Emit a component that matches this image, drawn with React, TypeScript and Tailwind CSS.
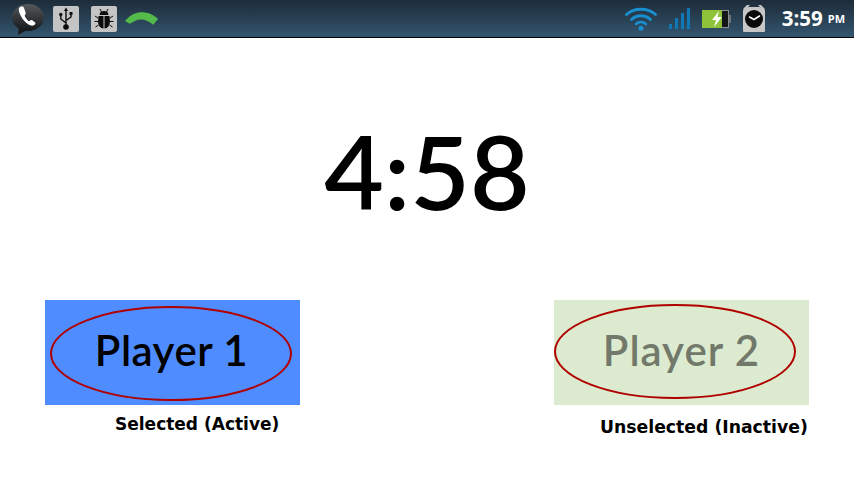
import { Fragment } from 'react';

function PhoneBubble() {
  return (
    <svg width="34" height="34" viewBox="0 0 34 34">
      <defs>
        <linearGradient id="bubble" x1="0" y1="0" x2="0" y2="1">
          <stop offset="0" stopColor="#55595c" />
          <stop offset="1" stopColor="#15181a" />
        </linearGradient>
      </defs>
      <ellipse cx="17" cy="15.500" rx="16" ry="13.500" fill="url(#bubble)" />
      <path d="M8 25 L7 33 L16 28 Z" fill="#1a1c1e" />
      <path
        d="M9 5 C7.500 6 7.500 8 8.500 11 C10 15.500 13.500 20 17.500 22.500 C20 24 22.500 24 24 22.500 C24.800 21.500 24.500 20.800 23.500 20 L21.200 18.300 C20.200 17.600 19.500 18 18.800 18.800 C18 19.300 17.200 19 16 17.500 C14.500 15.800 13.500 14 13.800 13 C14.600 12.300 15 11.500 14.500 10.300 L13 6 C12.500 4.700 10.500 4.200 9 5 Z"
        fill="#ffffff"
      />
    </svg>
  );
}

function UsbIcon() {
  return (
    <div className="flex h-[26px] w-[26px] items-center justify-center rounded-[2px] bg-[#c4c4c4]">
      <svg width="16" height="24" viewBox="0 0 16 24">
        <path d="M8 0.500 L10 4 L6 4 Z" fill="#0a0a0a" />
        <path d="M8 3 V20 M8 16 L2.800 12 V8.500 M8 13.500 L13 10 V7.500" stroke="#0a0a0a" strokeWidth="1.400" fill="none" />
        <circle cx="2.800" cy="7.500" r="1.700" fill="#0a0a0a" />
        <rect x="11.500" y="5" width="3" height="3" fill="#0a0a0a" />
        <circle cx="8" cy="20" r="2.800" fill="#0a0a0a" />
      </svg>
    </div>
  );
}

function BugIcon() {
  return (
    <div className="flex h-[26px] w-[26px] items-center justify-center rounded-[2px] bg-[#c4c4c4]">
      <svg width="22" height="22" viewBox="0 0 22 22">
        <path d="M7 1 L8.500 4 M15 1 L13.500 4" stroke="#0a0a0a" strokeWidth="1" />
        <path d="M6.500 7 C6.500 4.500 8.500 3 11 3 C13.500 3 15.500 4.500 15.500 7 Z" fill="#0a0a0a" />
        <path d="M5.500 8 H10.500 V20.500 C7.500 20.500 5 17.500 5 13 Z M11.500 8 H16.500 L17 13 C17 17.500 14.500 20.500 11.500 20.500 Z" fill="#0a0a0a" />
        <path d="M5 10 L2 8 M5 13.500 L1.500 13.500 M5.500 17 L2.500 19 M17 10 L20 8 M17 13.500 L20.500 13.500 M16.500 17 L19.500 19" stroke="#0a0a0a" strokeWidth="1" />
      </svg>
    </div>
  );
}

function CallArc() {
  return (
    <svg width="35" height="15" viewBox="0 0 36 15">
      <path d="M1 10 C7 3 13 1 18 1 C24 1 30 3 35 8 L30 14 C26 10.500 22 8.500 18 8.500 C13 8.500 10 10.500 6 13 Z" fill="#54bb4a" />
    </svg>
  );
}

function Wifi() {
  return (
    <svg width="32" height="24" viewBox="0 0 32 24" fill="none" stroke="#1a8fd0" strokeLinecap="round">
      <path d="M1.500 7.500 C9 0.500 23 0.500 30.500 7.500" strokeWidth="2.800" />
      <path d="M6.500 12.500 C12 7.500 20 7.500 25.500 12.500" strokeWidth="2.800" />
      <path d="M11 17 C14 14.500 18 14.500 21 17" strokeWidth="2.600" />
      <circle cx="16" cy="21.300" r="2.500" fill="#1a8fd0" stroke="none" />
    </svg>
  );
}

function Signal() {
  return (
    <div className="flex h-[21px] items-end gap-[3px]">
      <div className="h-[5px] w-[3px] bg-[#0f78b8]" />
      <div className="h-[11px] w-[3px] bg-[#0f78b8]" />
      <div className="h-[16px] w-[3px] bg-[#0f78b8]" />
      <div className="h-[21px] w-[3px] bg-[#0f78b8]" />
    </div>
  );
}

function Battery() {
  return (
    <svg width="29" height="18" viewBox="0 0 29 18">
      <rect x="0" y="0" width="27" height="18" fill="#8a9094" />
      <rect x="19" y="1" width="7" height="16" fill="#141617" />
      <rect x="0" y="0" width="20" height="18" fill="#8fc43a" />
      <rect x="27" y="5" width="2" height="8" fill="#6a7276" />
      <path d="M17 1 L10 10 H14 L12 17 L20 7 H15.500 Z" fill="#ffffff" />
    </svg>
  );
}

function Alarm() {
  return (
    <svg width="24" height="27" viewBox="0 0 24 27">
      <path d="M1 4 L5 0 H8 L3 5 Z M23 4 L19 0 H16 L21 5 Z" fill="#c6c6c6" />
      <path d="M1 5 L6 2 H18 L23 5 V25.500 C23 26.500 22.500 27 21.500 27 H2.500 C1.500 27 1 26.500 1 25.500 Z" fill="#c6c6c6" />
      <circle cx="12" cy="14" r="9" fill="#0a0a0a" />
      <path d="M12 14.500 L17.500 11 M12 14.500 L7.500 12" stroke="#ffffff" strokeWidth="1.500" strokeLinecap="round" />
    </svg>
  );
}

type PlayerProps = {
  name: string;
  caption: string;
  active: boolean;
};

function PlayerCard({ name, caption, active }: PlayerProps) {
  return (
    <div className="flex w-[255px] flex-col">
      <div
        className={
          active
            ? 'relative flex h-[105px] items-center justify-center bg-[#4f8cff] pr-[2px] pb-[5px] text-black'
            : 'relative flex h-[105px] items-center justify-center bg-[#dcebcf] pb-[5px] text-[#72796b]'
        }
      >
        <span
          className={
            active
              ? "font-['Lato',sans-serif] text-[42px] leading-none font-semibold tracking-[0.5px]"
              : "font-['Lato',sans-serif] text-[42px] leading-none font-semibold tracking-[1px]"
          }
        >
          {name}
        </span>
        {/* hand drawn ring over the button */}
        <svg className="absolute inset-0" width="255" height="105" viewBox="0 0 255 105" fill="none">
          {active ? (
            <ellipse cx="126" cy="53.500" rx="120" ry="46.500" stroke="#b00000" strokeWidth="2" />
          ) : (
            <ellipse cx="121" cy="51.500" rx="120" ry="46.500" stroke="#b00000" strokeWidth="2" />
          )}
        </svg>
      </div>
      <p
        className={
          active
            ? "mt-[9px] pl-[70px] font-['DejaVu_Sans',sans-serif] text-[17px] leading-5 font-bold whitespace-nowrap text-black"
            : "mt-[12px] pl-[46px] font-['DejaVu_Sans',sans-serif] text-[17.25px] leading-5 font-bold whitespace-nowrap text-black"
        }
      >
        {caption}
      </p>
    </div>
  );
}

export default function App() {
  return (
    <Fragment>
      <div className="flex h-[480px] w-[854px] flex-col overflow-hidden bg-white">
        {/* Status bar */}
        <div className="flex h-[38px] shrink-0 items-center justify-between border-b border-black bg-gradient-to-b from-[#1e2c3a] to-[#33566f] pr-[9px] pl-[11px]">
          <div className="flex items-center">
            <PhoneBubble />
            <div className="ml-[8px]">
              <UsbIcon />
            </div>
            <div className="ml-[12px]">
              <BugIcon />
            </div>
            <div className="ml-[7px]">
              <CallArc />
            </div>
          </div>
          <div className="flex items-center">
            <Wifi />
            <div className="ml-[12px]">
              <Signal />
            </div>
            <div className="ml-[12px]">
              <Battery />
            </div>
            <div className="ml-[11px]">
              <Alarm />
            </div>
            <span className="ml-[16px] font-['Open_Sans',sans-serif] text-[20.5px] leading-none font-bold text-white">
              3:59
            </span>
            <span className="ml-[5px] font-['Open_Sans',sans-serif] text-[11px] leading-none font-bold text-white">
              PM
            </span>
          </div>
        </div>

        {/* Timer */}
        <div className="flex h-[262px] shrink-0 items-center justify-center pt-[2px]">
          <span className="font-['Lato',sans-serif] text-[103px] leading-none font-semibold text-black">4:58</span>
        </div>

        {/* Players */}
        <div className="flex justify-between pr-[45px] pl-[45px]">
          <PlayerCard name="Player 1" caption="Selected (Active)" active />
          <PlayerCard name="Player 2" caption="Unselected (Inactive)" active={false} />
        </div>
      </div>
    </Fragment>
  );
}
